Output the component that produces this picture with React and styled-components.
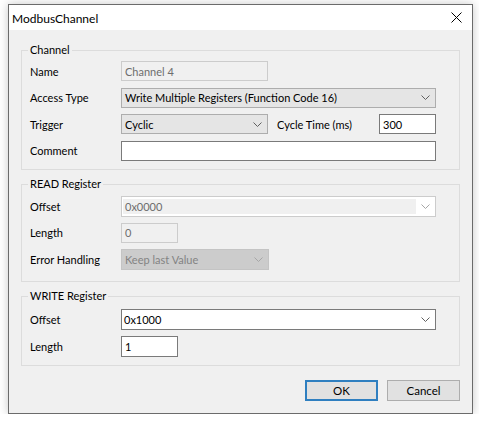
import React from 'react';
import styled, { createGlobalStyle } from 'styled-components';

const GlobalStyle = createGlobalStyle`
  body {
    margin: 0;
    background: #ffffff;
    font-family: "Lato", "Noto Sans", sans-serif;
    font-size: 11px;
    color: #000000;
  }
`;

const Page = styled.div`
  padding: 4px 6px 0 8px;
`;

const Window = styled.div`
  width: 463px;
  height: 408px;
  border: 1px solid #6b6b6b;
  box-shadow: 0 0 9px rgba(0, 0, 0, 0.22);
  display: flex;
  flex-direction: column;
  background: #f0f0f0;
`;

const TitleBar = styled.div`
  height: 25px;
  background: #ffffff;
  display: flex;
  align-items: center;
  justify-content: space-between;
  padding: 0 10px 0 3px;
`;

const Title = styled.span`
  font-size: 12px;
  padding-top: 1px;
`;

const Body = styled.div`
  flex: 1;
  display: flex;
  flex-direction: column;
  gap: 14px;
  padding: 20px 12px 0 12px;
`;

const Group = styled.div`
  position: relative;
  border: 1px solid #dcdcdc;
  padding: ${(p) => p.$pad};
  display: flex;
  flex-direction: column;
  gap: ${(p) => p.$gap};
`;

const Legend = styled.span`
  position: absolute;
  top: -9px;
  left: 6px;
  padding: 0 2px;
  line-height: 16px;
  background: #f0f0f0;
`;

const Row = styled.div`
  display: flex;
  align-items: center;
  height: ${(p) => p.$h || 20}px;
`;

const Label = styled.span`
  width: ${(p) => p.$w || 91}px;
  flex-shrink: 0;
`;

const SideLabel = styled.span`
  margin-left: 9px;
  width: 102px;
`;

const TextBox = styled.div`
  box-sizing: border-box;
  width: ${(p) => p.$w}px;
  height: 100%;
  display: flex;
  align-items: center;
  padding-left: 3px;
  border: 1px solid ${(p) => (p.$disabled ? '#cccccc' : '#7a7a7a')};
  background: ${(p) => (p.$disabled ? '#f0f0f0' : '#ffffff')};
  color: ${(p) => (p.$disabled ? '#6d6d6d' : '#000000')};
`;

const comboStyles = {
  list: { border: '#adadad', bg: '#e5e5e5', color: '#000000', field: 'transparent' },
  edit: { border: '#7a7a7a', bg: '#ffffff', color: '#000000', field: 'transparent' },
  disabledList: { border: '#c4c4c4', bg: '#cccccc', color: '#838383', field: 'transparent' },
  disabledEdit: { border: '#cccccc', bg: '#ffffff', color: '#6d6d6d', field: '#f0f0f0' },
};

const Combo = styled.div`
  box-sizing: border-box;
  width: ${(p) => p.$w}px;
  height: 100%;
  display: flex;
  align-items: stretch;
  border: 1px solid ${(p) => comboStyles[p.$kind].border};
  background: ${(p) => comboStyles[p.$kind].bg};
  color: ${(p) => comboStyles[p.$kind].color};
  padding: ${(p) => (p.$kind === 'disabledEdit' ? '2px 0 2px 1px' : '0')};
`;

const ComboText = styled.div`
  flex: 1;
  display: flex;
  align-items: center;
  padding-left: ${(p) => p.$pl}px;
  background: ${(p) => comboStyles[p.$kind].field};
`;

const Arrow = styled.div`
  width: 19px;
  display: flex;
  align-items: center;
  justify-content: center;
`;

const ButtonBar = styled.div`
  display: flex;
  justify-content: flex-end;
  gap: 9px;
`;

const Button = styled.button`
  box-sizing: border-box;
  width: 73px;
  height: 21px;
  font: inherit;
  font-size: 11.5px;
  color: #000000;
  background: #e1e1e1;
  border: ${(p) => (p.$primary ? '2px solid #2f7fc0' : '1px solid #adadad')};
  padding: 0;
`;

const Chevron = ({ color = '#606060' }) => (
  <svg width="9" height="5" viewBox="0 0 9 5">
    <polyline points="0.5,0.5 4.5,4.5 8.5,0.5" fill="none" stroke={color} strokeWidth="1" />
  </svg>
);

const ComboBox = ({ w, kind, children }) => (
  <Combo $w={w} $kind={kind}>
    <ComboText $kind={kind} $pl={kind === 'disabledEdit' || kind === 'edit' ? 2 : 3}>
      {children}
    </ComboText>
    <Arrow>
      <Chevron color={kind.startsWith('disabled') ? '#a6a6a6' : '#606060'} />
    </Arrow>
  </Combo>
);

const CloseIcon = () => (
  <svg width="11" height="11" viewBox="0 0 11 11">
    <path d="M0.5 0.5 L10.5 10.5 M10.5 0.5 L0.5 10.5" stroke="#000" strokeWidth="1" fill="none" />
  </svg>
);

export default function App() {
  return (
    <>
      <GlobalStyle />
      <Page>
        <Window>
          <TitleBar>
            <Title>ModbusChannel</Title>
            <CloseIcon />
          </TitleBar>
          <Body>
            <Group $pad="10px 23px 8px 8px" $gap="6.67px">
              <Legend>Channel</Legend>
              <Row>
                <Label>Name</Label>
                <TextBox $w={147} $disabled>Channel 4</TextBox>
              </Row>
              <Row>
                <Label>Access Type</Label>
                <ComboBox w={315} kind="list">Write Multiple Registers (Function Code 16)</ComboBox>
              </Row>
              <Row>
                <Label>Trigger</Label>
                <ComboBox w={147} kind="list">Cyclic</ComboBox>
                <SideLabel>Cycle Time (ms)</SideLabel>
                <TextBox $w={57}>300</TextBox>
              </Row>
              <Row>
                <Label>Comment</Label>
                <TextBox $w={315} />
              </Row>
            </Group>

            <Group $pad="11px 23px 11px 8px" $gap="6px">
              <Legend>READ Register</Legend>
              <Row $h={21}>
                <Label>Offset</Label>
                <ComboBox w={315} kind="disabledEdit">0x0000</ComboBox>
              </Row>
              <Row $h={20}>
                <Label>Length</Label>
                <TextBox $w={57} $disabled>0</TextBox>
              </Row>
              <Row $h={21}>
                <Label>Error Handling</Label>
                <ComboBox w={148} kind="disabledList">Keep last Value</ComboBox>
              </Row>
            </Group>

            <Group $pad="12px 23px 8px 8px" $gap="6px">
              <Legend>WRITE Register</Legend>
              <Row $h={21}>
                <Label>Offset</Label>
                <ComboBox w={315} kind="edit">0x1000</ComboBox>
              </Row>
              <Row $h={21}>
                <Label>Length</Label>
                <TextBox $w={57}>1</TextBox>
              </Row>
            </Group>

            <ButtonBar>
              <Button $primary>OK</Button>
              <Button>Cancel</Button>
            </ButtonBar>
          </Body>
        </Window>
      </Page>
    </>
  );
}
